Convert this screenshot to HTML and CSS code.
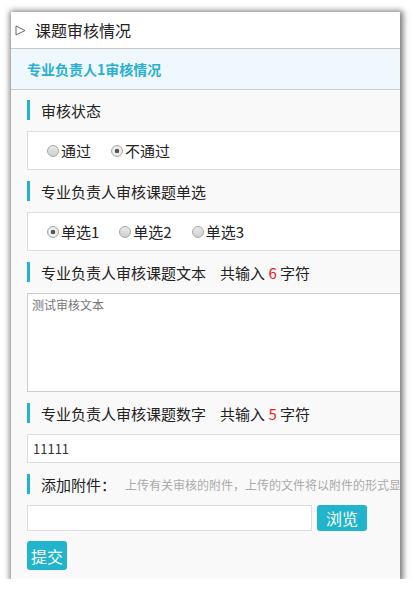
FILE: index.html
```html
<!DOCTYPE html>
<html lang="zh-CN">
<head>
    <meta charset="UTF-8">
    <meta name="viewport" content="width=device-width, initial-scale=1.0">
    <title>课题审核情况</title>
    <link rel="stylesheet" href="styles.css">
</head>
<body>
    <div class="panel">
        <div class="panel-head">
            <svg class="arrow" width="11" height="11" viewBox="0 0 11 11">
                <polygon points="1,1 10,5.5 1,10" fill="none" stroke="#666" stroke-width="1"/>
            </svg>
            <span>课题审核情况</span>
        </div>

        <div class="sub-head">专业负责人1审核情况</div>

        <div class="panel-body">
            <div class="field-title">审核状态</div>
            <div class="radio-box">
                <label class="radio"><input type="radio" name="status">通过</label>
                <label class="radio"><input type="radio" name="status" checked>不通过</label>
            </div>

            <div class="field-title">专业负责人审核课题单选</div>
            <div class="radio-box">
                <label class="radio"><input type="radio" name="choice" checked>单选1</label>
                <label class="radio"><input type="radio" name="choice">单选2</label>
                <label class="radio"><input type="radio" name="choice">单选3</label>
            </div>

            <div class="field-title">专业负责人审核课题文本<span class="count">共输入 <em>6</em> 字符</span></div>
            <textarea class="text-box">测试审核文本</textarea>

            <div class="field-title">专业负责人审核课题数字<span class="count">共输入 <em>5</em> 字符</span></div>
            <input class="num-box" type="text" value="11111">

            <div class="field-title">添加附件：<span class="hint">上传有关审核的附件，上传的文件将以附件的形式显示</span></div>
            <div class="file-row">
                <input class="file-box" type="text">
                <button class="btn browse">浏览</button>
            </div>

            <button class="btn submit">提交</button>
        </div>
    </div>
</body>
</html>
```

FILE: styles.css
```css
body {
    font-family: "Noto Sans CJK SC", "Noto Sans", sans-serif;
    margin: 0;
    padding: 0;
    background-color: #fff;
    color: #222;
}

.panel {
    margin: 12px 0 0 11px;
    width: 389px;
    height: 567px;
    background: #f9f9f9;
    box-shadow: 1px 1px 6px 2px rgba(0, 0, 0, 0.55);
    overflow: hidden;
}

.panel-head {
    display: flex;
    align-items: center;
    height: 36px;
    padding-left: 4px;
    background: #fff;
    border-bottom: 1px solid #c8c8c8;
    font-size: 16px;
    color: #222;
}

.arrow {
    margin-right: 9px;
}

.sub-head {
    display: flex;
    align-items: center;
    height: 40px;
    padding-left: 16px;
    background: #eff8fd;
    border-bottom: 1px solid #ccc;
    font-size: 14px;
    font-weight: bold;
    color: #2aafd3;
}

.panel-body {
    display: flex;
    flex-direction: column;
    align-items: flex-start;
    gap: 11px;
    padding: 10px 0 0 16px;
}

.field-title {
    display: flex;
    align-items: center;
    height: 20px;
    padding-left: 11px;
    border-left: 3px solid #22b4cc;
    font-size: 15px;
    color: #222;
    white-space: nowrap;
}

.count {
    margin-left: 14px;
}

.count em {
    font-style: normal;
    color: #f01818;
}

.hint {
    margin-left: 9px;
    font-size: 12px;
    color: #aaa;
}

.radio-box {
    display: flex;
    align-items: center;
    gap: 20px;
    box-sizing: border-box;
    width: 400px;
    height: 39px;
    padding-left: 19px;
    background: #fff;
    border: 1px solid #ddd;
}

.radio {
    display: flex;
    align-items: center;
    font-size: 15px;
    color: #222;
}

.radio input {
    appearance: none;
    width: 12px;
    height: 12px;
    margin: 0 2px 0 0;
    border: 1px solid #a8a8a8;
    border-radius: 50%;
    background: linear-gradient(#eaeaea, #cfcfcf);
}

.radio input:checked {
    background: radial-gradient(circle, #555 0, #555 2px, #f2f2f2 2.6px, #dcdcdc 100%);
}

.text-box {
    box-sizing: border-box;
    width: 400px;
    height: 99px;
    padding: 2px 4px;
    margin: 0;
    border: 1px solid #ccc;
    background: #fff;
    font-family: inherit;
    font-size: 12px;
    color: #777;
    resize: none;
}

.num-box {
    box-sizing: border-box;
    width: 400px;
    height: 29px;
    padding: 0 5px;
    margin: 0;
    border: 1px solid #ddd;
    background: #fff;
    font-family: inherit;
    font-size: 13px;
    color: #333;
}

.file-row {
    display: flex;
    gap: 5px;
}

.file-box {
    box-sizing: border-box;
    width: 285px;
    height: 26px;
    margin: 0;
    border: 1px solid #ddd;
    background: #fff;
}

.btn {
    border: none;
    border-radius: 3px;
    background-color: #22b4cc;
    color: #fff;
    font-family: inherit;
    font-size: 16px;
    padding: 0;
    cursor: pointer;
}

.browse {
    width: 50px;
    height: 26px;
}

.submit {
    width: 40px;
    height: 29px;
    margin-top: -1px;
}
```
